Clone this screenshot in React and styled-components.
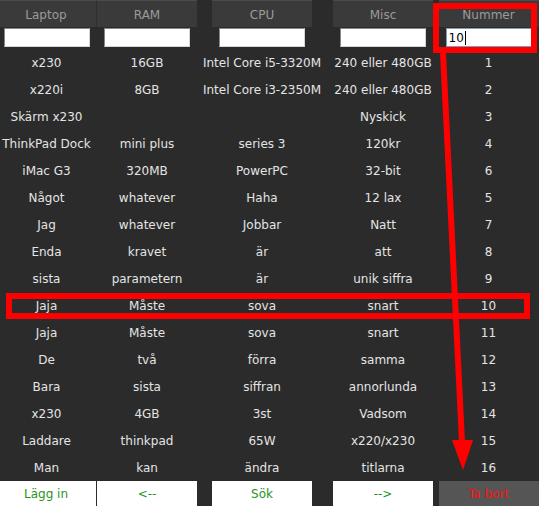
import React from "react";
import styled, { createGlobalStyle } from "styled-components";

const Global = createGlobalStyle`
  html, body { margin: 0; padding: 0; background: #2b2b2b; }
  body { font-family: "DejaVu Sans", Verdana, sans-serif; font-size: 12px; overflow: hidden; }
`;

const COLS = "93px 108px 122px 120px 91px";

const Page = styled.div`
  position: relative;
  width: 539px;
  height: 506px;
  background: #2b2b2b;
  overflow: hidden;
`;

const Row = styled.div`
  display: grid;
  grid-template-columns: ${COLS};
  height: ${(p) => p.$h}px;
  align-items: ${(p) => p.$align || "center"};
`;

const HeadCell = styled.div`
  justify-self: center;
  width: 100px;
  height: 27px;
  box-sizing: border-box;
  background: #3a3a3a;
  border-top: 1px solid #4a4a4a;
  color: #9a9a9a;
  display: flex;
  align-items: center;
  justify-content: center;
  padding-top: 2px;
  ${(p) => p.$first && "border-right: 1px solid #2f2f2f;"}
`;

const Field = styled.input`
  justify-self: center;
  width: 86px;
  height: 19px;
  box-sizing: border-box;
  margin: 1px 0 0;
  padding: 0 3px;
  background: #fff;
  border: 1px solid;
  border-color: #8a8580 #d8d4d0 #d8d4d0 #8a8580;
  font: 12px "DejaVu Sans", sans-serif;
  outline: none;
`;

const FocusField = styled.div`
  justify-self: center;
  width: 86px;
  height: 19px;
  box-sizing: border-box;
  margin-top: 1px;
  padding: 0 2px;
  background: #fff;
  border: 1px solid #7f9db9;
  color: #000;
  font-size: 12px;
  display: flex;
  align-items: center;
`;

const Caret = styled.span`
  display: inline-block;
  width: 1px;
  height: 14px;
  background: #000;
  margin-left: 1px;
`;

const Cell = styled.div`
  justify-self: center;
  white-space: nowrap;
  color: #e4e4e4;
  text-align: center;
`;

const Btn = styled.div`
  justify-self: center;
  width: 100px;
  height: 25px;
  box-sizing: border-box;
  display: flex;
  align-items: center;
  justify-content: center;
  background: ${(p) => (p.$danger ? "#555555" : "#ffffff")};
  color: ${(p) => (p.$danger ? "#ff1010" : "#1f941f")};
  font-size: 12px;
  ${(p) => p.$first && "border-right: 1px solid #2b2b2b;"}
`;

const Box = styled.div`
  position: absolute;
  box-sizing: border-box;
  border: 6px solid #ff0000;
  pointer-events: none;
`;

const Overlay = styled.svg`
  position: absolute;
  left: 0;
  top: 0;
  pointer-events: none;
`;

const headers = ["Laptop", "RAM", "CPU", "Misc", "Nummer"];

const data = [
  ["x230", "16GB", "Intel Core i5-3320M", "240 eller 480GB", "1"],
  ["x220i", "8GB", "Intel Core i3-2350M", "240 eller 480GB", "2"],
  ["Skärm x230", "", "", "Nyskick", "3"],
  ["ThinkPad Dock", "mini plus", "series 3", "120kr", "4"],
  ["iMac G3", "320MB", "PowerPC", "32-bit", "6"],
  ["Något", "whatever", "Haha", "12 lax", "5"],
  ["Jag", "whatever", "Jobbar", "Natt", "7"],
  ["Enda", "kravet", "är", "att", "8"],
  ["sista", "parametern", "är", "unik siffra", "9"],
  ["Jaja", "Måste", "sova", "snart", "10"],
  ["Jaja", "Måste", "sova", "snart", "11"],
  ["De", "två", "förra", "samma", "12"],
  ["Bara", "sista", "siffran", "annorlunda", "13"],
  ["x230", "4GB", "3st", "Vadsom", "14"],
  ["Laddare", "thinkpad", "65W", "x220/x230", "15"],
  ["Man", "kan", "ändra", "titlarna", "16"],
];

const buttons = ["Lägg in", "<--", "Sök", "-->", "Ta bort"];

export default function App() {
  return (
    <Page>
      <Global />
      <Row $h={27} $align="start">
        {headers.map((h, i) => (
          <HeadCell key={h} $first={i === 0}>{h}</HeadCell>
        ))}
      </Row>
      <Row $h={22} $align="start">
        <Field />
        <Field />
        <Field />
        <Field />
        <FocusField>
          10<Caret />
        </FocusField>
      </Row>
      {data.map((r, i) => (
        <Row key={i} $h={27}>
          {r.map((c, j) => (
            <Cell key={j}>{c}</Cell>
          ))}
        </Row>
      ))}
      <Row $h={25}>
        {buttons.map((b, i) => (
          <Btn key={b} $danger={i === 4} $first={i === 0}>{b}</Btn>
        ))}
      </Row>

      <Box style={{ left: 433, top: 3, width: 104, height: 50 }} />
      <Box style={{ left: 6, top: 293, width: 524, height: 26 }} />
      <Overlay width="539" height="506">
        <line x1="443" y1="53" x2="462" y2="442" stroke="#ff0000" strokeWidth="6" />
        <polygon points="452,440 473,440 463,470" fill="#ff0000" />
      </Overlay>
    </Page>
  );
}
